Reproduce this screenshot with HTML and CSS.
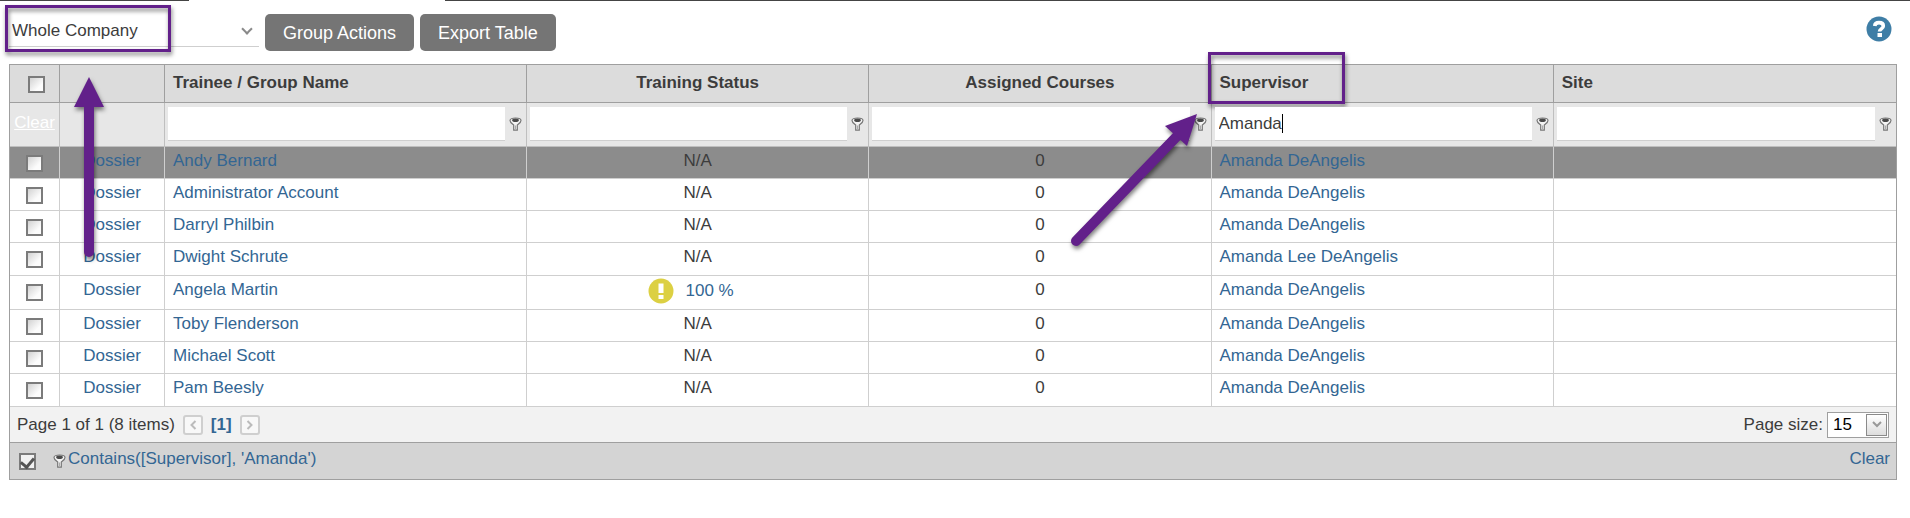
FILE: index.html
```html
<!DOCTYPE html>
<html lang="en">
<head>
  <meta charset="UTF-8">
  <meta name="viewport" content="width=device-width, initial-scale=1.0">
  <title>Trainees</title>
  <link rel="stylesheet" href="styles.css">
</head>
<body>

<!-- shared icons -->
<svg class="defs" aria-hidden="true">
  <symbol id="funnel" viewBox="0 0 13 14">
    <path d="M1 3.500C1 2 3.300 1 6.500 1S12 2 12 3.500c0 2-2 3.200-3.700 4.500v5.200H4.700V8C3 6.700 1 5.500 1 3.500z" fill="#f4f4f4" stroke="#777" stroke-width="1.200"/>
    <ellipse cx="6.500" cy="3.200" rx="3.400" ry="1.800" fill="#4a4a4a"/>
    <path d="M6.500 8.500v4" stroke="#aaa"/>
  </symbol>
</svg>

<div class="top-line"><span></span><span></span></div>

<div class="toolbar">
  <div class="company">
    <select class="company-select" aria-label="Group">
      <option>Whole Company</option>
    </select>
    <div class="mark mark-company"></div>
  </div>
  <button class="action-btn">Group Actions</button>
  <button class="action-btn">Export Table</button>
  <a href="#help" class="help" aria-label="Help">
    <svg width="26" height="26" viewBox="0 0 26 26">
      <circle cx="13" cy="13" r="12.500" fill="#3f7ea6"/>
      <path d="M8.700 10C8.900 7.600 10.600 6.600 13 6.600c2.600 0 4.300 1.300 4.300 3.300 0 3-3.800 2.900-3.800 5.700" fill="none" stroke="#fff" stroke-width="3.600"/>
      <rect x="11.500" y="17" width="4.500" height="4" fill="#fff"/>
    </svg>
  </a>
</div>

<main class="grid">
  <table>
    <colgroup>
      <col class="col-check"><col class="col-dossier"><col class="col-name"><col><col><col><col>
    </colgroup>
    <thead>
      <tr class="head">
        <th class="center"><input type="checkbox" aria-label="Select all"></th>
        <th class="arrow-cell">
          <svg class="arrow arrow-up" width="50" height="200" viewBox="0 0 50 200">
            <path d="M25 28v157" stroke="#62208a" stroke-width="10" stroke-linecap="round"/>
            <path d="M25 10l15 30H10z" fill="#62208a"/>
          </svg>
        </th>
        <th>Trainee / Group Name</th>
        <th class="center">Training Status</th>
        <th class="center">Assigned Courses</th>
        <th class="arrow-cell">Supervisor
          <div class="mark mark-supervisor"></div>
          <svg class="arrow arrow-diagonal" width="150" height="160" viewBox="0 0 150 160">
            <path d="M13 141L119 31" stroke="#62208a" stroke-width="10" stroke-linecap="round"/>
            <path d="M134 14l-10 32-22-20z" fill="#62208a"/>
          </svg>
        </th>
        <th>Site</th>
      </tr>
      <tr class="filters">
        <td class="center"><a href="#clear" class="clear-all">Clear</a></td>
        <td></td>
        <td><div class="filter"><input type="text" aria-label="Filter name"><button aria-label="Name filter options"><svg><use href="#funnel"/></svg></button></div></td>
        <td><div class="filter"><input type="text" aria-label="Filter status"><button aria-label="Status filter options"><svg><use href="#funnel"/></svg></button></div></td>
        <td><div class="filter"><input type="text" aria-label="Filter courses"><button aria-label="Courses filter options"><svg><use href="#funnel"/></svg></button></div></td>
        <td><div class="filter typing"><input type="text" aria-label="Filter supervisor" value="Amanda"><button aria-label="Supervisor filter options"><svg><use href="#funnel"/></svg></button></div></td>
        <td><div class="filter"><input type="text" aria-label="Filter site"><button aria-label="Site filter options"><svg><use href="#funnel"/></svg></button></div></td>
      </tr>
    </thead>
    <tbody>
      <tr class="selected">
        <td class="center"><input type="checkbox" aria-label="Select Andy Bernard"></td>
        <td class="center"><a href="#dossier">Dossier</a></td>
        <td><a href="#user">Andy Bernard</a></td>
        <td class="center">N/A</td>
        <td class="center">0</td>
        <td><a href="#supervisor">Amanda DeAngelis</a></td>
        <td></td>
      </tr>
      <tr>
        <td class="center"><input type="checkbox" aria-label="Select Administrator Account"></td>
        <td class="center"><a href="#dossier">Dossier</a></td>
        <td><a href="#user">Administrator Account</a></td>
        <td class="center">N/A</td>
        <td class="center">0</td>
        <td><a href="#supervisor">Amanda DeAngelis</a></td>
        <td></td>
      </tr>
      <tr>
        <td class="center"><input type="checkbox" aria-label="Select Darryl Philbin"></td>
        <td class="center"><a href="#dossier">Dossier</a></td>
        <td><a href="#user">Darryl Philbin</a></td>
        <td class="center">N/A</td>
        <td class="center">0</td>
        <td><a href="#supervisor">Amanda DeAngelis</a></td>
        <td></td>
      </tr>
      <tr>
        <td class="center"><input type="checkbox" aria-label="Select Dwight Schrute"></td>
        <td class="center"><a href="#dossier">Dossier</a></td>
        <td><a href="#user">Dwight Schrute</a></td>
        <td class="center">N/A</td>
        <td class="center">0</td>
        <td><a href="#supervisor">Amanda Lee DeAngelis</a></td>
        <td></td>
      </tr>
      <tr class="alert-row">
        <td class="center"><input type="checkbox" aria-label="Select Angela Martin"></td>
        <td class="center"><a href="#dossier">Dossier</a></td>
        <td><a href="#user">Angela Martin</a></td>
        <td>
          <a href="#status" class="status">
            <svg width="26" height="26" viewBox="0 0 26 26">
              <circle cx="13" cy="13" r="12.500" fill="#dcd043"/>
              <path d="M10.500 5.500h5V15h-5zM10.500 17h5v4h-5z" fill="#fff"/>
            </svg>
            <span>100 %</span>
          </a>
        </td>
        <td class="center">0</td>
        <td><a href="#supervisor">Amanda DeAngelis</a></td>
        <td></td>
      </tr>
      <tr>
        <td class="center"><input type="checkbox" aria-label="Select Toby Flenderson"></td>
        <td class="center"><a href="#dossier">Dossier</a></td>
        <td><a href="#user">Toby Flenderson</a></td>
        <td class="center">N/A</td>
        <td class="center">0</td>
        <td><a href="#supervisor">Amanda DeAngelis</a></td>
        <td></td>
      </tr>
      <tr>
        <td class="center"><input type="checkbox" aria-label="Select Michael Scott"></td>
        <td class="center"><a href="#dossier">Dossier</a></td>
        <td><a href="#user">Michael Scott</a></td>
        <td class="center">N/A</td>
        <td class="center">0</td>
        <td><a href="#supervisor">Amanda DeAngelis</a></td>
        <td></td>
      </tr>
      <tr>
        <td class="center"><input type="checkbox" aria-label="Select Pam Beesly"></td>
        <td class="center"><a href="#dossier">Dossier</a></td>
        <td><a href="#user">Pam Beesly</a></td>
        <td class="center">N/A</td>
        <td class="center">0</td>
        <td><a href="#supervisor">Amanda DeAngelis</a></td>
        <td></td>
      </tr>
    </tbody>
  </table>

  <div class="pager">
    <span>Page 1 of 1 (8 items)</span>
    <button class="page-btn" aria-label="Previous page"><svg width="8" height="10" viewBox="0 0 8 10"><path d="M6.500 1l-4 4 4 4" fill="none" stroke="#bbb" stroke-width="2"/></svg></button>
    <b class="current">[1]</b>
    <button class="page-btn" aria-label="Next page"><svg width="8" height="10" viewBox="0 0 8 10"><path d="M1.500 1l4 4-4 4" fill="none" stroke="#bbb" stroke-width="2"/></svg></button>
    <label class="size-label" for="pageSize">Page size:</label>
    <div class="size">
      <select id="pageSize"><option>15</option></select>
      <span class="size-btn"><svg width="10" height="7" viewBox="0 0 10 7"><path d="M1 1l4 4 4-4" fill="none" stroke="#999" stroke-width="2"/></svg></span>
    </div>
  </div>

  <div class="filter-bar">
    <input type="checkbox" aria-label="Filter enabled" checked>
    <svg class="funnel"><use href="#funnel"/></svg>
    <a href="#filter">Contains([Supervisor], 'Amanda')</a>
    <a href="#clear" class="clear">Clear</a>
  </div>
</main>

</body>
</html>
```

FILE: styles.css
```css
:root {
  --text: #3c3c3c;
  --link: #336693;
  --line: #cfcfcf;
  --border: #9f9f9f;
  --purple: #62208a;
}

* {
  box-sizing: border-box;
}

body {
  margin: 0;
  background: white;
  color: var(--text);
  font-family: "Liberation Sans", Arial, sans-serif;
  font-size: 17px;
  line-height: 20px;
}

input, select, button {
  font: inherit;
  color: inherit;
}

a {
  color: var(--link);
  text-decoration: none;
}

.defs {
  position: absolute;
  width: 0;
  height: 0;
}

.top-line {
  display: flex;
  gap: 256px;
  height: 1px;
}

.top-line span {
  background: #444;
  flex: 1;
}

.top-line span:first-child {
  flex: 0 0 189px;
}

/* Toolbar */
.toolbar {
  display: flex;
  align-items: center;
  gap: 6px;
  padding: 13px 18px 13px 9px;
}

.company {
  position: relative;
  width: 250px;
}

.company-select {
  appearance: none;
  width: 100%;
  height: 33px;
  margin-bottom: 4px;
  padding: 2px 3px 0;
  display: block;
  border: none;
  border-bottom: 1px solid var(--line);
  background: white;
}

.company::after {
  content: "";
  position: absolute;
  right: 8px;
  top: 11px;
  width: 6px;
  height: 6px;
  border: solid #8a8a8a;
  border-width: 0 2px 2px 0;
  transform: rotate(45deg);
}

.action-btn {
  height: 37px;
  padding: 0 18px;
  border: none;
  border-radius: 5px;
  background: #757575;
  color: white;
  font-size: 18px;
}

.help {
  margin-left: auto;
  height: 26px;
  margin-bottom: 8px;
}

/* Grid */
.grid {
  margin: 0 13px 0 9px;
  border: 1px solid var(--border);
}

table {
  width: 100%;
  table-layout: fixed;
  border-collapse: separate;
  border-spacing: 0;
}

.col-check {
  width: 50px;
}

.col-dossier {
  width: 105px;
}

.col-name {
  width: 362px;
}

th, td {
  height: 32px;
  padding: 4px 8px 0;
  border-right: 1px solid var(--line);
  border-bottom: 1px solid var(--line);
  text-align: left;
  vertical-align: top;
}

th:last-child, td:last-child {
  border-right: none;
}

tbody tr:nth-child(4n) td {
  height: 33px;
}

tbody .alert-row td {
  height: 34px;
}

.center {
  text-align: center;
}

.head th {
  height: 38px;
  padding-top: 8px;
  background: #dcdcdc;
  border-color: var(--border);
}

.filters td {
  height: 44px;
  padding: 4px 3px;
  background: #e7e7e7;
  border-color: #bfbfbf;
}

.filters .center {
  padding-top: 10px;
}

.clear-all {
  color: white;
  text-decoration: underline;
}

.filter {
  position: relative;
  display: flex;
  align-items: center;
}

.filter input {
  flex: 1;
  min-width: 0;
  height: 34px;
  padding: 0 4px;
  border: none;
  border-bottom: 1px solid var(--line);
  outline: none;
  background: white;
}

/* caret behind the typed text */
.typing::after {
  content: "";
  position: absolute;
  left: 67px;
  top: 7px;
  width: 1px;
  height: 19px;
  background: black;
}

.filter button {
  display: flex;
  padding: 0 1px 0 4px;
  border: none;
  background: none;
}

.filter svg, .funnel {
  width: 13px;
  height: 14px;
}

.selected td {
  background: #8c8c8c;
}

input[type="checkbox"] {
  appearance: none;
  display: block;
  flex: none;
  width: 17px;
  height: 17px;
  margin: 3px 0 0 10px;
  border: 2px solid #7b7b7b;
  background: linear-gradient(135deg, #d2d2d2, #fcfcfc 70%);
}

tbody input[type="checkbox"] {
  margin: 4px 0 0 8px;
}

.status {
  display: flex;
  align-items: center;
  justify-content: center;
  gap: 12px;
  padding-right: 14px;
  height: 26px;
}

tbody .alert-row td:nth-child(4) {
  padding-top: 2px;
}

/* Footer */
.pager {
  display: flex;
  align-items: center;
  gap: 8px;
  height: 36px;
  padding: 0 7px;
  background: #f2f2f2;
  border-bottom: 1px solid var(--border);
}

.page-btn {
  display: flex;
  align-items: center;
  justify-content: center;
  width: 20px;
  height: 20px;
  padding: 0;
  border: 2px solid var(--line);
  border-radius: 3px;
  background: #f8f8f8;
}

.current {
  color: var(--link);
}

.size-label {
  margin-left: auto;
}

.size {
  position: relative;
  width: 62px;
  height: 26px;
  margin-left: -4px;
}

.size select {
  appearance: none;
  width: 100%;
  height: 100%;
  padding: 0 5px;
  border: 1px solid var(--border);
  border-radius: 0;
  background: white;
  color: black;
}

.size-btn {
  position: absolute;
  top: 2px;
  right: 2px;
  display: flex;
  align-items: center;
  justify-content: center;
  width: 21px;
  height: 22px;
  border: 1px solid #8a8a8a;
  background: linear-gradient(#fff, #ddd);
  pointer-events: none;
}

.filter-bar {
  display: flex;
  align-items: center;
  height: 36px;
  padding: 0 6px 4px 9px;
  background: #d4d4d4;
}

.filter-bar input[type="checkbox"] {
  margin: 4px 17px 0 0;
  background: #f2f2f2;
}

.filter-bar input:checked::after {
  content: "";
  display: block;
  width: 6px;
  height: 10px;
  margin: 0 auto;
  border: solid #555;
  border-width: 0 3px 3px 0;
  transform: rotate(40deg);
}

.filter-bar .funnel {
  margin: 4px 2px 0 0;
}

.clear {
  margin-left: auto;
}

/* Callouts */
.mark {
  position: absolute;
  border: 3px solid var(--purple);
  filter: drop-shadow(1px 3px 2px rgba(0, 0, 0, 0.5));
  pointer-events: none;
}

.mark-company {
  left: -4px;
  top: -9px;
  width: 166px;
  height: 47px;
}

.arrow-cell {
  position: relative;
}

.mark-supervisor {
  left: -4px;
  top: -13px;
  width: 137px;
  height: 52px;
}

.arrow {
  position: absolute;
  z-index: 1;
  filter: drop-shadow(1px 3px 2px rgba(0, 0, 0, 0.5));
  pointer-events: none;
}

.arrow-up {
  left: 4px;
  top: 2px;
}

.arrow-diagonal {
  left: -149px;
  top: 35px;
}
```
